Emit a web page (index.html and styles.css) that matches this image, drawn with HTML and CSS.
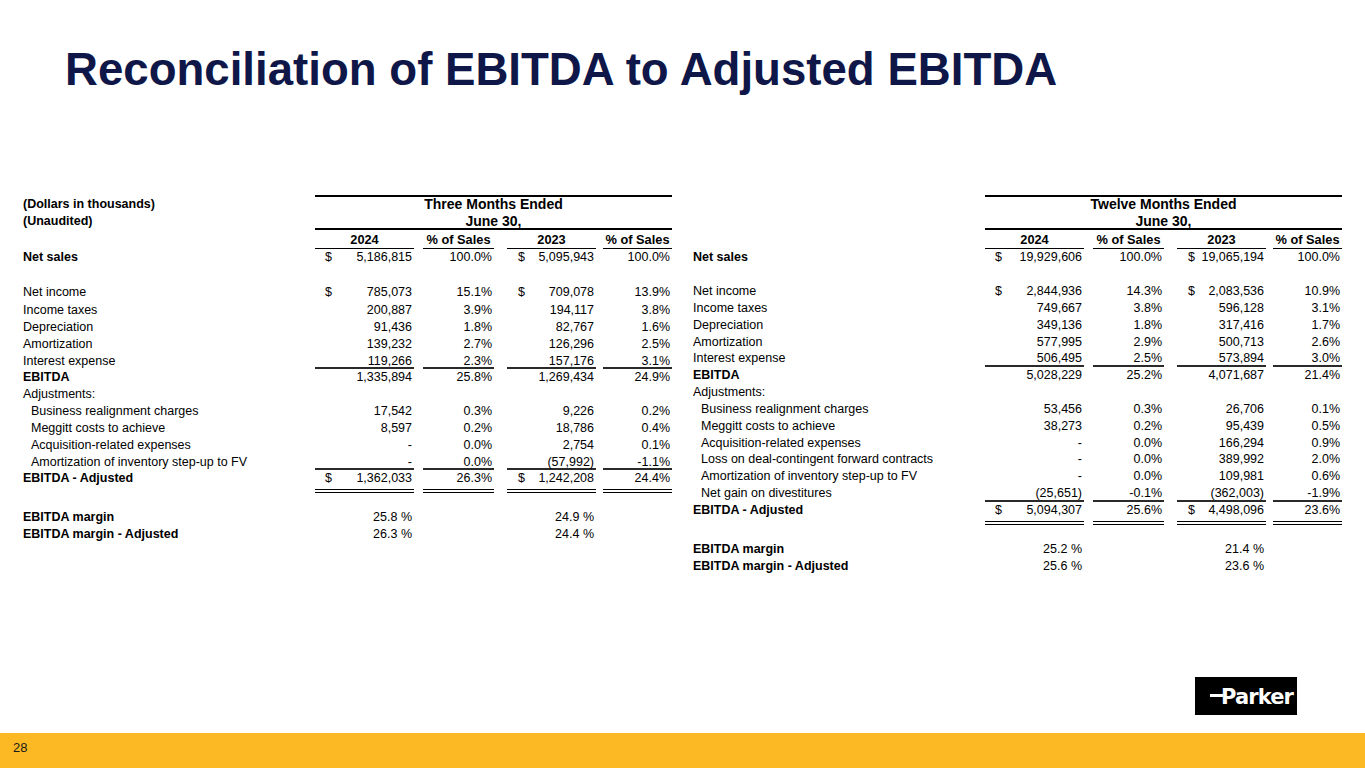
FILE: index.html
```html
<!DOCTYPE html>
<html lang="en">
<head>
<meta charset="utf-8">
<title>Reconciliation of EBITDA to Adjusted EBITDA</title>
<link rel="stylesheet" href="styles.css">
</head>
<body>
<div class="slide">
  <h1 class="title">Reconciliation of EBITDA to Adjusted EBITDA</h1>

  <div class="tables">
    <!-- Three months -->
    <div class="fin">
      <div class="row h1"><div class="lbl b">(Dollars in thousands)</div><div class="span b">Three Months Ended</div></div>
      <div class="row h2"><div class="lbl b">(Unaudited)</div><div class="span b">June 30,</div></div>
      <div class="row h3"><div class="lbl"></div><div class="c c1 u ctr b">2024</div><div class="c c2 u ctr b">% of Sales</div><div class="c c3 u ctr b">2023</div><div class="c c4 u ctr b">% of Sales</div></div>
      <div class="row"><div class="lbl b">Net sales</div><div class="c c1 d"><span>$</span><span>5,186,815</span></div><div class="c c2">100.0%</div><div class="c c3 d"><span>$</span><span>5,095,943</span></div><div class="c c4">100.0%</div></div>
      <div class="row"></div>
      <div class="row first"><div class="lbl">Net income</div><div class="c c1 d"><span>$</span><span>785,073</span></div><div class="c c2">15.1%</div><div class="c c3 d"><span>$</span><span>709,078</span></div><div class="c c4">13.9%</div></div>
      <div class="row dr"><div class="lbl">Income taxes</div><div class="c c1">200,887</div><div class="c c2">3.9%</div><div class="c c3">194,117</div><div class="c c4">3.8%</div></div>
      <div class="row dr"><div class="lbl">Depreciation</div><div class="c c1">91,436</div><div class="c c2">1.8%</div><div class="c c3">82,767</div><div class="c c4">1.6%</div></div>
      <div class="row dr"><div class="lbl">Amortization</div><div class="c c1">139,232</div><div class="c c2">2.7%</div><div class="c c3">126,296</div><div class="c c4">2.5%</div></div>
      <div class="row dr"><div class="lbl">Interest expense</div><div class="c c1 s">119,266</div><div class="c c2 s">2.3%</div><div class="c c3 s">157,176</div><div class="c c4 s">3.1%</div></div>
      <div class="row dr"><div class="lbl b">EBITDA</div><div class="c c1">1,335,894</div><div class="c c2">25.8%</div><div class="c c3">1,269,434</div><div class="c c4">24.9%</div></div>
      <div class="row dr"><div class="lbl">Adjustments:</div></div>
      <div class="row dr"><div class="lbl ind">Business realignment charges</div><div class="c c1">17,542</div><div class="c c2">0.3%</div><div class="c c3">9,226</div><div class="c c4">0.2%</div></div>
      <div class="row dr"><div class="lbl ind">Meggitt costs to achieve</div><div class="c c1">8,597</div><div class="c c2">0.2%</div><div class="c c3">18,786</div><div class="c c4">0.4%</div></div>
      <div class="row dr"><div class="lbl ind">Acquisition-related expenses</div><div class="c c1">-</div><div class="c c2">0.0%</div><div class="c c3">2,754</div><div class="c c4">0.1%</div></div>
      <div class="row dr"><div class="lbl ind">Amortization of inventory step-up to FV</div><div class="c c1 s">-</div><div class="c c2 s">0.0%</div><div class="c c3 s">(57,992)</div><div class="c c4 s">-1.1%</div></div>
      <div class="row dr"><div class="lbl b">EBITDA - Adjusted</div><div class="c c1 d"><span>$</span><span>1,362,033</span></div><div class="c c2">26.3%</div><div class="c c3 d"><span>$</span><span>1,242,208</span></div><div class="c c4">24.4%</div></div>
      <div class="row dbl"><div class="lbl"></div><div class="c c1"></div><div class="c c2"></div><div class="c c3"></div><div class="c c4"></div></div>
      <div class="row gap"></div>
      <div class="row"><div class="lbl b">EBITDA margin</div><div class="c c1">25.8 %</div><div class="c c2"></div><div class="c c3">24.9 %</div><div class="c c4"></div></div>
      <div class="row"><div class="lbl b">EBITDA margin - Adjusted</div><div class="c c1">26.3 %</div><div class="c c2"></div><div class="c c3">24.4 %</div><div class="c c4"></div></div>
    </div>

    <!-- Twelve months -->
    <div class="fin">
      <div class="row h1"><div class="lbl"></div><div class="span b">Twelve Months Ended</div></div>
      <div class="row h2"><div class="lbl"></div><div class="span b">June 30,</div></div>
      <div class="row h3"><div class="lbl"></div><div class="c c1 u ctr b">2024</div><div class="c c2 u ctr b">% of Sales</div><div class="c c3 u ctr b">2023</div><div class="c c4 u ctr b">% of Sales</div></div>
      <div class="row"><div class="lbl b">Net sales</div><div class="c c1 d"><span>$</span><span>19,929,606</span></div><div class="c c2">100.0%</div><div class="c c3 d"><span>$</span><span>19,065,194</span></div><div class="c c4">100.0%</div></div>
      <div class="row"></div>
      <div class="row dr"><div class="lbl">Net income</div><div class="c c1 d"><span>$</span><span>2,844,936</span></div><div class="c c2">14.3%</div><div class="c c3 d"><span>$</span><span>2,083,536</span></div><div class="c c4">10.9%</div></div>
      <div class="row dr"><div class="lbl">Income taxes</div><div class="c c1">749,667</div><div class="c c2">3.8%</div><div class="c c3">596,128</div><div class="c c4">3.1%</div></div>
      <div class="row dr"><div class="lbl">Depreciation</div><div class="c c1">349,136</div><div class="c c2">1.8%</div><div class="c c3">317,416</div><div class="c c4">1.7%</div></div>
      <div class="row dr"><div class="lbl">Amortization</div><div class="c c1">577,995</div><div class="c c2">2.9%</div><div class="c c3">500,713</div><div class="c c4">2.6%</div></div>
      <div class="row dr"><div class="lbl">Interest expense</div><div class="c c1 s">506,495</div><div class="c c2 s">2.5%</div><div class="c c3 s">573,894</div><div class="c c4 s">3.0%</div></div>
      <div class="row dr"><div class="lbl b">EBITDA</div><div class="c c1">5,028,229</div><div class="c c2">25.2%</div><div class="c c3">4,071,687</div><div class="c c4">21.4%</div></div>
      <div class="row dr"><div class="lbl">Adjustments:</div></div>
      <div class="row dr"><div class="lbl ind">Business realignment charges</div><div class="c c1">53,456</div><div class="c c2">0.3%</div><div class="c c3">26,706</div><div class="c c4">0.1%</div></div>
      <div class="row dr"><div class="lbl ind">Meggitt costs to achieve</div><div class="c c1">38,273</div><div class="c c2">0.2%</div><div class="c c3">95,439</div><div class="c c4">0.5%</div></div>
      <div class="row dr"><div class="lbl ind">Acquisition-related expenses</div><div class="c c1">-</div><div class="c c2">0.0%</div><div class="c c3">166,294</div><div class="c c4">0.9%</div></div>
      <div class="row dr"><div class="lbl ind">Loss on deal-contingent forward contracts</div><div class="c c1">-</div><div class="c c2">0.0%</div><div class="c c3">389,992</div><div class="c c4">2.0%</div></div>
      <div class="row dr"><div class="lbl ind">Amortization of inventory step-up to FV</div><div class="c c1">-</div><div class="c c2">0.0%</div><div class="c c3">109,981</div><div class="c c4">0.6%</div></div>
      <div class="row dr"><div class="lbl ind">Net gain on divestitures</div><div class="c c1 s">(25,651)</div><div class="c c2 s">-0.1%</div><div class="c c3 s">(362,003)</div><div class="c c4 s">-1.9%</div></div>
      <div class="row dr"><div class="lbl b">EBITDA - Adjusted</div><div class="c c1 d"><span>$</span><span>5,094,307</span></div><div class="c c2">25.6%</div><div class="c c3 d"><span>$</span><span>4,498,096</span></div><div class="c c4">23.6%</div></div>
      <div class="row dbl"><div class="lbl"></div><div class="c c1"></div><div class="c c2"></div><div class="c c3"></div><div class="c c4"></div></div>
      <div class="row gap"></div>
      <div class="row"><div class="lbl b">EBITDA margin</div><div class="c c1">25.2 %</div><div class="c c2"></div><div class="c c3">21.4 %</div><div class="c c4"></div></div>
      <div class="row"><div class="lbl b">EBITDA margin - Adjusted</div><div class="c c1">25.6 %</div><div class="c c2"></div><div class="c c3">23.6 %</div><div class="c c4"></div></div>
    </div>
  </div>

  <div class="logo-row">
    <div class="logo"><span class="dash"></span><span class="brand">Parker</span></div>
  </div>

  <footer class="footer">28</footer>
</div>
</body>
</html>
```

FILE: styles.css
```css
* { box-sizing: border-box; }

html, body {
  margin: 0;
  padding: 0;
  background: #ffffff;
}

.slide {
  width: 1365px;
  height: 768px;
  display: flex;
  flex-direction: column;
  font-family: "Liberation Sans", Arial, sans-serif;
  color: #000;
  overflow: hidden;
}

.title {
  margin: 44px 0 0 65px;
  font-size: 45.6px;
  line-height: 52px;
  font-weight: bold;
  color: #0f1648;
  letter-spacing: 0;
}

.tables {
  margin-top: 99px;
  padding-left: 23px;
  display: flex;
  gap: 21px;
}

.fin {
  width: 649px;
  font-size: 12.5px;
}

.row {
  display: grid;
  grid-template-columns: 292px 99px 80px 102px 76px;
  height: 17px;
  line-height: 17px;
  white-space: nowrap;
}

.row.dr { height: 16.85px; line-height: 16.85px; }
.row.first { height: 19px; line-height: 19px; }

.row.h1 { height: 18px; line-height: 19px; }
.row.h1 .span { box-shadow: inset 0 2px #000; font-size: 14px; }
.row.h2 .span { box-shadow: inset 0 -2px #000; font-size: 14px; line-height: 16px; }
.row.h3 { height: 19px; line-height: 18px; padding-top: 1px; }

.span {
  grid-column: 2 / 6;
  text-align: center;
}

.lbl { padding-left: 0; }
.lbl.ind { padding-left: 8px; }

.b { font-weight: bold; }

.c {
  text-align: right;
  padding-right: 2px;
}
.c2 { margin-left: 9px; }
.c3 { margin-left: 13px; }
.c4 { margin-left: 7px; }

.c.ctr { text-align: center; padding-right: 0; font-size: 12.8px; }

.c.d {
  display: flex;
  justify-content: space-between;
}
.c1.d { padding-left: 10px; }
.c3.d { padding-left: 11px; }

.u { box-shadow: inset 0 -1px #000; }
.s { box-shadow: inset 0 -2px #2a2a2a; }

.row.dbl { height: 6px; }
.row.dbl .c {
  margin-top: 2px;
  height: 4px;
  border-top: 1px solid #000;
  border-bottom: 1px solid #000;
}
.row.gap { height: 16px; }

.logo-row {
  margin-top: auto;
  display: flex;
  justify-content: flex-end;
  padding: 0 68px 18px 0;
}

.logo {
  width: 102px;
  height: 38px;
  background: #000;
  display: flex;
  align-items: center;
  padding-left: 15px;
}

.dash {
  width: 13px;
  height: 3px;
  background: #fff;
  margin-right: -2px;
  margin-top: -1px;
}

.brand {
  font-family: "DejaVu Sans", "Liberation Sans", sans-serif;
  font-weight: 900;
  font-size: 21px;
  letter-spacing: -0.9px;
  color: #fff;
  line-height: 21px;
  margin-top: 3px;
}

.footer {
  height: 35px;
  background: #fdb924;
  font-size: 13px;
  line-height: 30px;
  padding-left: 13px;
  color: #1a1a1a;
}
```
